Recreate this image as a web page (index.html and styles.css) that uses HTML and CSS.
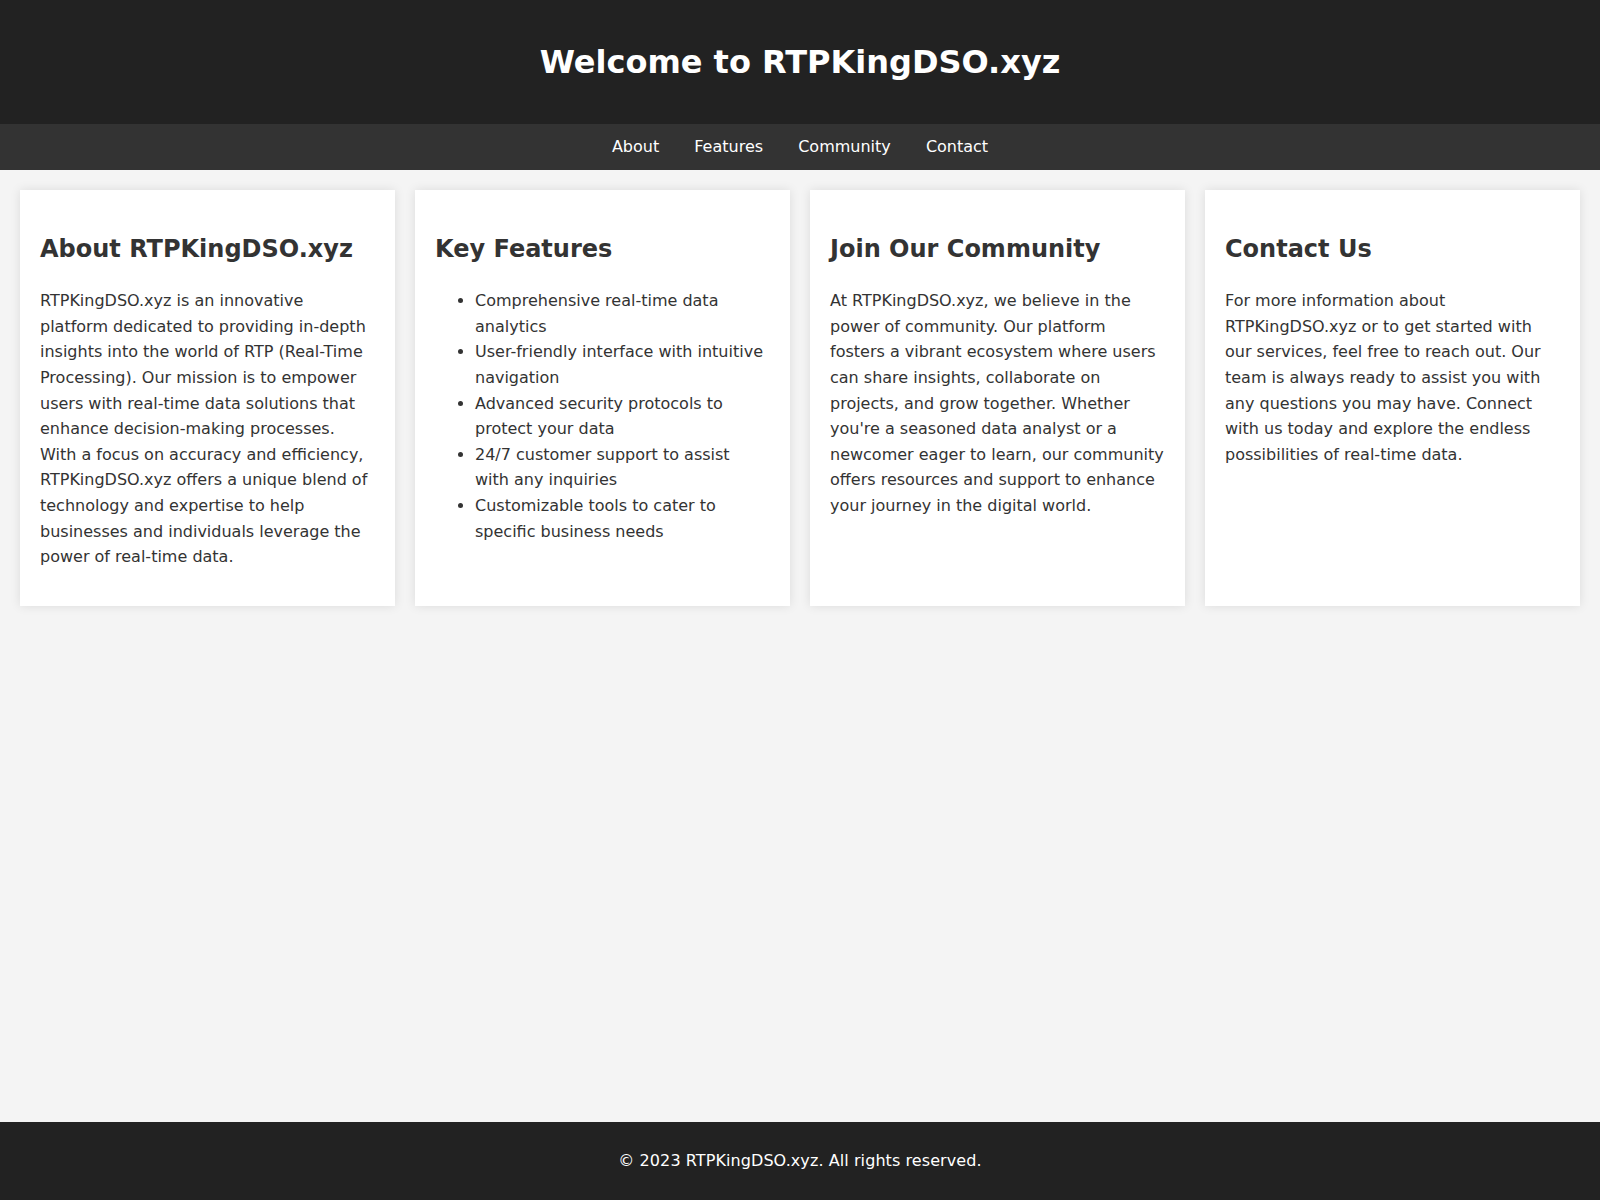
FILE: index.html
```html
<!DOCTYPE html>
<html lang="en">
<head>
<meta charset="utf-8">
<title>RTPKingDSO.xyz</title>
<link rel="stylesheet" href="styles.css">
</head>
<body>
<header class="site-header">
  <h1 class="site-title">Welcome to RTPKingDSO.xyz</h1>
</header>
<nav class="site-nav">
  <a href="#about">About</a>
  <a href="#features">Features</a>
  <a href="#community">Community</a>
  <a href="#contact">Contact</a>
</nav>
<main class="content">
  <section class="card" id="about">
    <h2>About RTPKingDSO.xyz</h2>
    <p>RTPKingDSO.xyz is an innovative platform dedicated to providing in-depth insights into the world of RTP (Real-Time Processing). Our mission is to empower users with real-time data solutions that enhance decision-making processes. With a focus on accuracy and efficiency, RTPKingDSO.xyz offers a unique blend of technology and expertise to help businesses and individuals leverage the power of real-time data.</p>
  </section>
  <section class="card" id="features">
    <h2>Key Features</h2>
    <ul class="feature-list">
      <li>Comprehensive real-time data analytics</li>
      <li>User-friendly interface with intuitive navigation</li>
      <li>Advanced security protocols to protect your data</li>
      <li>24/7 customer support to assist with any inquiries</li>
      <li>Customizable tools to cater to specific business needs</li>
    </ul>
  </section>
  <section class="card" id="community">
    <h2>Join Our Community</h2>
    <p>At RTPKingDSO.xyz, we believe in the power of community. Our platform fosters a vibrant ecosystem where users can share insights, collaborate on projects, and grow together. Whether you're a seasoned data analyst or a newcomer eager to learn, our community offers resources and support to enhance your journey in the digital world.</p>
  </section>
  <section class="card" id="contact">
    <h2>Contact Us</h2>
    <p>For more information about RTPKingDSO.xyz or to get started with our services, feel free to reach out. Our team is always ready to assist you with any questions you may have. Connect with us today and explore the endless possibilities of real-time data.</p>
  </section>
</main>
<footer class="site-footer">
  <p>&copy; 2023 RTPKingDSO.xyz. All rights reserved.</p>
</footer>
</body>
</html>
```

FILE: styles.css
```css
html, body {
  margin: 0;
  padding: 0;
}
body {
  font-family: "DejaVu Sans", sans-serif;
  font-size: 16px;
  line-height: 1.6;
  color: #333;
  background: #f4f4f4;
  min-height: 100vh;
  display: flex;
  flex-direction: column;
}
.site-header {
  background: #222;
  color: #fff;
  text-align: center;
  padding: 36px 0;
}
.site-title {
  margin: 0;
  font-size: 32px;
  line-height: 52px;
  font-weight: bold;
}
.site-nav {
  background: #333;
  text-align: center;
  padding: 10px 0;
  line-height: 26px;
}
.site-nav a {
  color: #fff;
  text-decoration: none;
  margin: 0 15px;
}
.content {
  flex: 1;
  display: flex;
  gap: 20px;
  padding: 20px;
  align-items: flex-start;
}
.card {
  flex: 1 1 0;
  background: #fff;
  padding: 20px;
  box-shadow: 0 0 10px rgba(0, 0, 0, 0.1);
  height: 376px;
}
.card h2 {
  font-size: 24px;
  margin: 0.83em 0;
}
.card p {
  margin: 16px 0;
}
.feature-list {
  margin: 16px 0;
  padding-left: 40px;
  padding-right: 2px;
}
.site-footer {
  background: #222;
  color: #fff;
  text-align: center;
  padding: 10px 0;
}
.site-footer p {
  margin: 16px 0;
  letter-spacing: 0.08px;
}
```
